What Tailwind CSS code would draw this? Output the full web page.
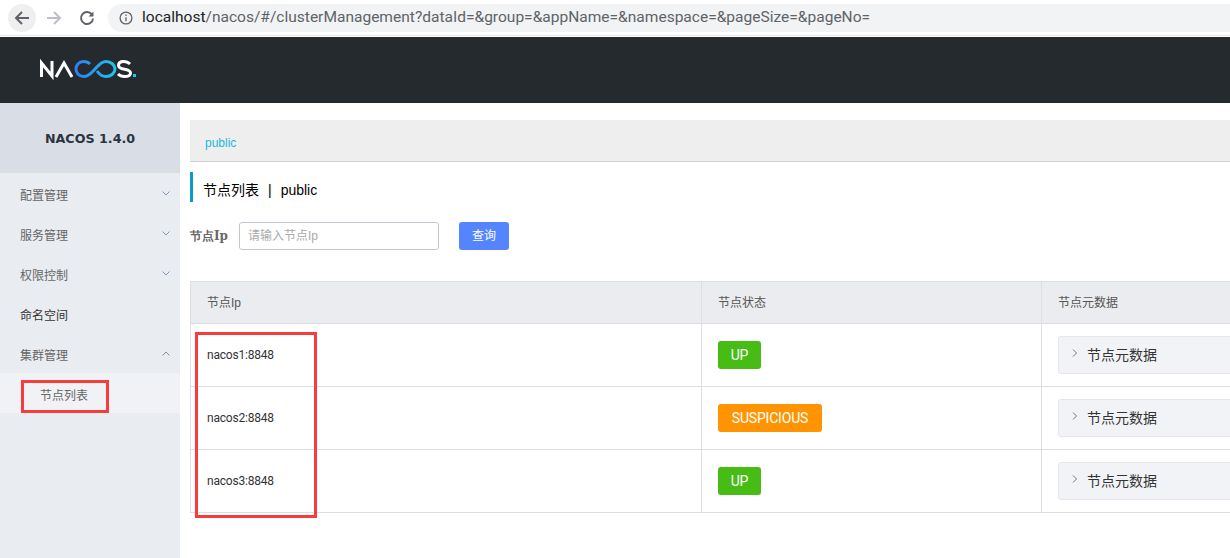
<!DOCTYPE html>
<html lang="en">
<head>
    <meta charset="UTF-8">
    <title>Nacos - 节点列表</title>
    <script src="https://cdn.jsdelivr.net/npm/@tailwindcss/browser@4"></script>
</head>
<body class="bg-white w-[1230px] h-[558px] overflow-hidden font-['Liberation_Sans','Noto_Sans_CJK_SC',sans-serif] text-[12px] text-[#333]">
    <div class="flex flex-col h-[558px]">
        <!-- Browser bar -->
        <div class="h-[36px] flex items-center shrink-0 border-b border-[#e4e4e4] pl-[8px]">
            <div class="w-[28px] h-[28px] rounded-full bg-[#efefef] flex items-center justify-center">
                <svg width="16" height="16" viewBox="0 0 16 16" fill="none" stroke="#5f6368" stroke-width="2"><path d="M15 8H2M8 2 2 8l6 6"/></svg>
            </div>
            <div class="w-[16px] h-[16px] ml-[10px]">
                <svg width="16" height="16" viewBox="0 0 16 16" fill="none" stroke="#bdc0c4" stroke-width="2"><path d="M1 8h13M8 2l6 6-6 6"/></svg>
            </div>
            <div class="w-[16px] h-[16px] ml-[17px]">
                <svg width="16" height="16" viewBox="0 0 16 16" fill="none" stroke="#5f6368" stroke-width="2"><path d="M13.2 5A6 6 0 1 0 14 8.5"/><path d="M14.5 1.5v5h-5z" fill="#5f6368" stroke="none"/></svg>
            </div>
            <div class="ml-[13px] flex-1 h-[28px] rounded-l-full bg-[#f1f3f4] flex items-center pl-[11px]">
                <svg width="14" height="14" viewBox="0 0 14 14" fill="none" stroke="#5f6368" stroke-width="1.3"><circle cx="7" cy="7" r="5.9"/><path d="M7 6.2v4M7 3.6v1.4"/></svg>
                <div class="ml-[9px] pt-[1px] text-[15.54px] text-[#5f6368] font-['Roboto','Noto_Sans',sans-serif] whitespace-nowrap"><span class="text-[#202124]">localhost</span>/nacos/#/clusterManagement?dataId=&amp;group=&amp;appName=&amp;namespace=&amp;pageSize=&amp;pageNo=</div>
            </div>
        </div>

        <!-- Header -->
        <header class="h-[67px] bg-[#252a2f] shrink-0 border-t border-white flex items-center pl-[39px] pb-[2px]">
            <svg width="98" height="22" viewBox="0 0 98 22" fill="none" stroke-width="3">
                <path d="M2.500 19V5l10.500 13V3" stroke="#fff"/>
                <path d="M17 19 25 5l8 14" stroke="#fff"/>
                <defs><linearGradient id="inf" gradientUnits="userSpaceOnUse" x1="36" x2="78" y1="0" y2="0"><stop offset="0" stop-color="#2f7ef0"/><stop offset="1" stop-color="#1cc8ee"/></linearGradient></defs>
                <path d="M51 6C49 4 47 3.500 44.500 3.500 40 3.500 37 7 37 11s3 7.500 7.500 7.500C50 18.500 53 14 56 11s6-7.500 11-7.500c5 0 9 3.500 9 7.500s-4 7.500-9 7.500c-4 0-7-2.500-9-5.500" stroke="url(#inf)"/>
                <path d="M91 6c-2-2-5-2.500-6.500-2.500-3.500 0-5 2-5 4 0 5.500 12 2 12 7.500 0 2.500-2.500 3.500-6 3.500-2.500 0-5-1-6.500-2.500" stroke="#fff"/>
                <rect x="94" y="16" width="3" height="3" fill="#1cc8ee" stroke="none"/>
            </svg>
        </header>

        <div class="flex-1 flex min-h-0">
            <!-- Sidebar -->
            <aside class="w-[180px] shrink-0 bg-[#e9ecf1] flex flex-col">
                <div class="h-[70px] pt-[1px] bg-[#d9dee6] flex items-center justify-center font-['DejaVu_Sans',sans-serif] font-bold text-[12.7px] text-[#2b3340]">NACOS 1.4.0</div>
                <div class="h-[40px] mt-[3px] flex items-center justify-between pl-[20px] pr-[10px] text-[#666]">配置管理
                    <svg class="-mt-[6px]" width="8" height="5" viewBox="0 0 8 5" fill="none" stroke="#7f97b6"><path d="M.5.5 4 4 7.500.5"/></svg>
                </div>
                <div class="h-[40px] flex items-center justify-between pl-[20px] pr-[10px] text-[#666]">服务管理
                    <svg class="-mt-[6px]" width="8" height="5" viewBox="0 0 8 5" fill="none" stroke="#7f97b6"><path d="M.5.5 4 4 7.500.5"/></svg>
                </div>
                <div class="h-[40px] flex items-center justify-between pl-[20px] pr-[10px] text-[#666]">权限控制
                    <svg class="-mt-[6px]" width="8" height="5" viewBox="0 0 8 5" fill="none" stroke="#7f97b6"><path d="M.5.5 4 4 7.500.5"/></svg>
                </div>
                <div class="h-[40px] flex items-center pl-[20px] text-[#333]">命名空间</div>
                <div class="h-[37px] pt-[3px] flex items-center justify-between pl-[20px] pr-[10px] text-[#666]">集群管理
                    <svg class="-mt-[6px]" width="8" height="5" viewBox="0 0 8 5" fill="none" stroke="#948e88"><path d="M.5 4.500 4 1l3.500 3.500"/></svg>
                </div>
                <div class="h-[40px] pt-[5px] bg-[#f0f2f6] flex items-center pl-[40px] text-[#666] relative">节点列表
                    <div class="absolute left-[21px] top-[7px] w-[88px] h-[33px] border-[3px] border-[#f83b3b]"></div>
                </div>
            </aside>

            <!-- Main -->
            <main class="flex-1 min-w-0 pl-[10px] pt-[17px]">
                <div class="h-[42px] bg-[#eeeeee] border-b border-[#cfcfcf] flex items-center pl-[15px] pt-[4px] text-[#1fb6d8]">public</div>
                <div class="mt-[10px] h-[30px] pt-[7px] border-l-[3px] border-[#0a9bcb] flex items-center pl-[10px] text-[14px] text-black">节点列表<span class="ml-[9px] mr-[9px]">|</span>public</div>

                <div class="mt-[20px] flex items-center h-[28px]">
                    <label class="w-[49px] font-['DejaVu_Serif',serif] font-bold text-[12px] text-[#666] whitespace-nowrap">节点Ip</label>
                    <div class="w-[200px] h-[28px] border border-[#c4c6cf] rounded-[3px] flex items-center pl-[8px] text-[#aaa]">请输入节点Ip</div>
                    <button class="ml-[20px] w-[50px] h-[28px] rounded-[3px] bg-[#5584ff] text-white">查询</button>
                </div>

                <!-- Table -->
                <div class="mt-[31px] border-t border-l border-[#dcdee3] grid grid-cols-[511px_340px_1fr] text-[#333]">
                    <div class="h-[42px] bg-[#ebecf0] border-b border-r border-[#dcdee3] flex items-center pl-[16px] text-[#555]">节点Ip</div>
                    <div class="h-[42px] bg-[#ebecf0] border-b border-r border-[#dcdee3] flex items-center pl-[16px] text-[#555]">节点状态</div>
                    <div class="h-[42px] bg-[#ebecf0] border-b border-[#dcdee3] flex items-center pl-[16px] text-[#555]">节点元数据</div>

                    <div class="h-[63px] border-b border-r border-[#dcdee3] flex items-center pl-[16px] font-['Roboto',sans-serif] tracking-[-0.2px]">nacos1:8848</div>
                    <div class="h-[63px] border-b border-r border-[#dcdee3] flex items-center pl-[16px]">
                        <span class="h-[28px] w-[43px] rounded-[3px] bg-[#46bc15] text-white text-[14px] tracking-[-0.2px] font-['Roboto',sans-serif] flex items-center justify-center">UP</span>
                    </div>
                    <div class="h-[63px] border-b border-[#dcdee3] flex items-center pl-[16px]">
                        <div class="h-[38px] w-[200px] bg-[#f2f3f7] border border-[#e6e7eb] rounded-[3px] flex items-center pl-[13px] text-[14px]">
                            <svg class="-mt-[4px]" width="6" height="8" viewBox="0 0 6 8" fill="none" stroke="#777"><path d="m1 .5 3.500 3.500L1 7.500"/></svg>
                            <span class="ml-[9px]">节点元数据</span>
                        </div>
                    </div>

                    <div class="h-[63px] border-b border-r border-[#dcdee3] flex items-center pl-[16px] font-['Roboto',sans-serif] tracking-[-0.2px]">nacos2:8848</div>
                    <div class="h-[63px] border-b border-r border-[#dcdee3] flex items-center pl-[16px]">
                        <span class="h-[28px] w-[104px] rounded-[3px] bg-[#ff9300] text-white text-[14px] tracking-[-0.2px] font-['Roboto',sans-serif] flex items-center justify-center">SUSPICIOUS</span>
                    </div>
                    <div class="h-[63px] border-b border-[#dcdee3] flex items-center pl-[16px]">
                        <div class="h-[38px] w-[200px] bg-[#f2f3f7] border border-[#e6e7eb] rounded-[3px] flex items-center pl-[13px] text-[14px]">
                            <svg class="-mt-[4px]" width="6" height="8" viewBox="0 0 6 8" fill="none" stroke="#777"><path d="m1 .5 3.500 3.500L1 7.500"/></svg>
                            <span class="ml-[9px]">节点元数据</span>
                        </div>
                    </div>

                    <div class="h-[63px] border-b border-r border-[#dcdee3] flex items-center pl-[16px] font-['Roboto',sans-serif] tracking-[-0.2px]">nacos3:8848</div>
                    <div class="h-[63px] border-b border-r border-[#dcdee3] flex items-center pl-[16px]">
                        <span class="h-[28px] w-[43px] rounded-[3px] bg-[#46bc15] text-white text-[14px] tracking-[-0.2px] font-['Roboto',sans-serif] flex items-center justify-center">UP</span>
                    </div>
                    <div class="h-[63px] border-b border-[#dcdee3] flex items-center pl-[16px]">
                        <div class="h-[38px] w-[200px] bg-[#f2f3f7] border border-[#e6e7eb] rounded-[3px] flex items-center pl-[13px] text-[14px]">
                            <svg class="-mt-[4px]" width="6" height="8" viewBox="0 0 6 8" fill="none" stroke="#777"><path d="m1 .5 3.500 3.500L1 7.500"/></svg>
                            <span class="ml-[9px]">节点元数据</span>
                        </div>
                    </div>
                </div>
            </main>
        </div>
    </div>

    <!-- Red highlight drawn over the table -->
    <div class="absolute left-[195px] top-[332px] w-[122px] h-[186px] border-[3px] border-[#f83b3b]"></div>
</body>
</html>
